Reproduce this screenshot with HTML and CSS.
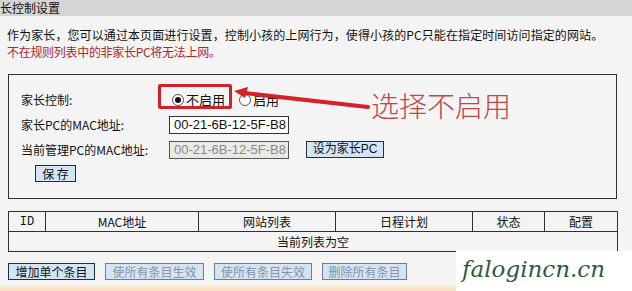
FILE: index.html
```html
<!DOCTYPE html>
<html lang="zh">
<head>
<meta charset="utf-8">
<link rel="stylesheet" href="styles.css">
</head>
<body>
<div class="page">
  <div class="titlebar">长控制设置</div>
  <div class="intro">
    <p class="line">作为家长，您可以通过本页面进行设置，控制小孩的上网行为，使得小孩的PC只能在指定时间访问指定的网站。</p>
    <p class="line warn">不在规则列表中的非家长PC将无法上网。</p>
  </div>
  <div class="box">
    <div class="form">
      <div class="label">家长控制:</div>
      <div class="value radios">
        <span class="radio on"></span><span class="rlabel">不启用</span>
        <span class="radio"></span><span class="rlabel">启用</span>
      </div>
      <div class="label">家长PC的MAC地址:</div>
      <div class="value"><span class="input">00-21-6B-12-5F-B8</span></div>
      <div class="label">当前管理PC的MAC地址:</div>
      <div class="value"><span class="input disabled">00-21-6B-12-5F-B8</span><span class="btn setpc">设为家长PC</span></div>
    </div>
    <div class="saverow"><span class="btn save">保 存</span></div>
  </div>
  <table class="list">
    <colgroup>
      <col class="c1"><col class="c2"><col class="c3"><col class="c4"><col class="c5"><col class="c6">
    </colgroup>
    <tr class="head"><td class="mono">ID</td><td>MAC地址</td><td>网站列表</td><td>日程计划</td><td>状态</td><td>配置</td></tr>
    <tr class="empty"><td colspan="6">当前列表为空</td></tr>
  </table>
  <div class="actions">
    <span class="btn b1">增加单个条目</span>
    <span class="btn dis b2">使所有条目生效</span>
    <span class="btn dis b3">使所有条目失效</span>
    <span class="btn dis b4">删除所有条目</span>
  </div>
  <div class="strip"></div>

  <div class="highlight"></div>
  <svg class="arrow" width="140" height="24" viewBox="0 0 140 24">
    <line x1="10" y1="6" x2="134" y2="20" stroke="#d42228" stroke-width="4" stroke-linecap="round"/>
    <polygon points="0,4 14,0 11,11" fill="#d42228"/>
  </svg>
  <div class="note">选择不启用</div>
  <div class="watermark">falogincn.cn</div>
</div>
</body>
</html>
```
FILE: styles.css
```css
* { box-sizing: border-box; }
html, body { margin: 0; padding: 0; }
body {
  background: #f4f4f4;
  font-family: "Noto Sans CJK SC", "DejaVu Sans", sans-serif;
  font-size: 12px;
  color: #111;
  width: 632px;
  height: 291px;
  overflow: hidden;
}
.page { position: relative; width: 632px; height: 291px; }
.titlebar {
  height: 16px;
  background: #d5d5d5;
  font-size: 12px;
  line-height: 16px;
  color: #111;
}
.intro { padding: 10px 0 0 7px; }
.line {
  margin: 0;
  font-size: 12px;
  letter-spacing: 0.1px;
  line-height: 17px;
  white-space: nowrap;
}
.warn { color: #b0262a; letter-spacing: -0.3px; }
.box {
  margin: 14px 0 0 8px;
  width: 609px;
  height: 125px;
  border: 1px solid #303030;
  padding: 12px 0 0 12px;
}
.form {
  display: grid;
  grid-template-columns: 148px 1fr;
  grid-auto-rows: 25px;
  align-items: center;
}
.label { font-size: 12px; line-height: 14px; }
.value { display: flex; align-items: center; }
.radios { padding-left: 3px; }
.radio {
  width: 12px; height: 12px;
  border: 1px solid #555;
  border-radius: 50%;
  background: #fff;
  position: relative;
  margin-right: 2px;
}
.radio.on::after {
  content: "";
  position: absolute;
  left: 2px; top: 2px;
  width: 6px; height: 6px;
  border-radius: 50%;
  background: #111;
}
.rlabel { margin-right: 14px; font-size: 13px; }
.input {
  width: 120px;
  height: 18px;
  border: 1px solid #333;
  background: #fff;
  font-family: "Liberation Sans", Arial, sans-serif;
  font-size: 13px;
  line-height: 16px;
  padding-left: 4px;
  color: #111;
}
.input.disabled { background: #e9e9e6; color: #8a8a8a; border-color: #555; }
.btn {
  display: inline-flex;
  align-items: center;
  justify-content: center;
  height: 17px;
  border: 1px solid #1f2d45;
  background: #d3e4f5;
  font-size: 12px;
  line-height: 15px;
  color: #111;
}
.setpc { width: 78px; margin-left: 17px; font-family: "Liberation Sans", "Noto Sans CJK SC", sans-serif; font-size: 12px; }
.saverow { padding: 3px 0 0 14px; }
.save { width: 41px; }
.list {
  margin: 12px 0 0 8px;
  width: 609px;
  border-collapse: collapse;
  table-layout: fixed;
  border: 1px solid #303030;
}
.list td {
  border: 1px solid #303030;
  height: 20px;
  padding: 0;
  text-align: center;
  font-size: 12px;
  line-height: 18px;
}
.mono { font-family: "Liberation Mono", monospace; font-size: 12px; }
.c1 { width: 37px; } .c2 { width: 153px; } .c3 { width: 137px; }
.c4 { width: 137px; } .c5 { width: 72px; } .c6 { width: 73px; }
.actions {
  display: flex;
  gap: 10px;
  margin: 11px 0 0 8px;
}
.b1 { width: 87px; }
.b2 { width: 99px; }
.b3 { width: 98px; }
.b4 { width: 85px; }
.btn.dis { color: #8594a8; border-color: #6d7d93; background: #d6e4f2; }
.strip {
  position: absolute;
  left: 0; right: 0; bottom: 0;
  height: 6px;
  background: linear-gradient(#fbeedd, #f4dcb8);
}
.highlight {
  position: absolute;
  left: 158px; top: 84px;
  width: 74px; height: 25px;
  border: 3px solid #d0222a;
  border-radius: 2px;
}
.arrow { position: absolute; left: 234px; top: 87px; }
.note {
  position: absolute;
  left: 371px; top: 88px;
  font-size: 28px;
  line-height: 34px;
  color: #c0464a;
  font-weight: 300;
}
.watermark {
  position: absolute;
  left: 456px; top: 251px;
  width: 176px; height: 40px;
  background: #fff;
  font-family: "DejaVu Serif", serif;
  font-style: italic;
  font-size: 23px;
  line-height: 36px;
  color: #2c5a40;
  padding-left: 6px;
  white-space: nowrap;
}
```
